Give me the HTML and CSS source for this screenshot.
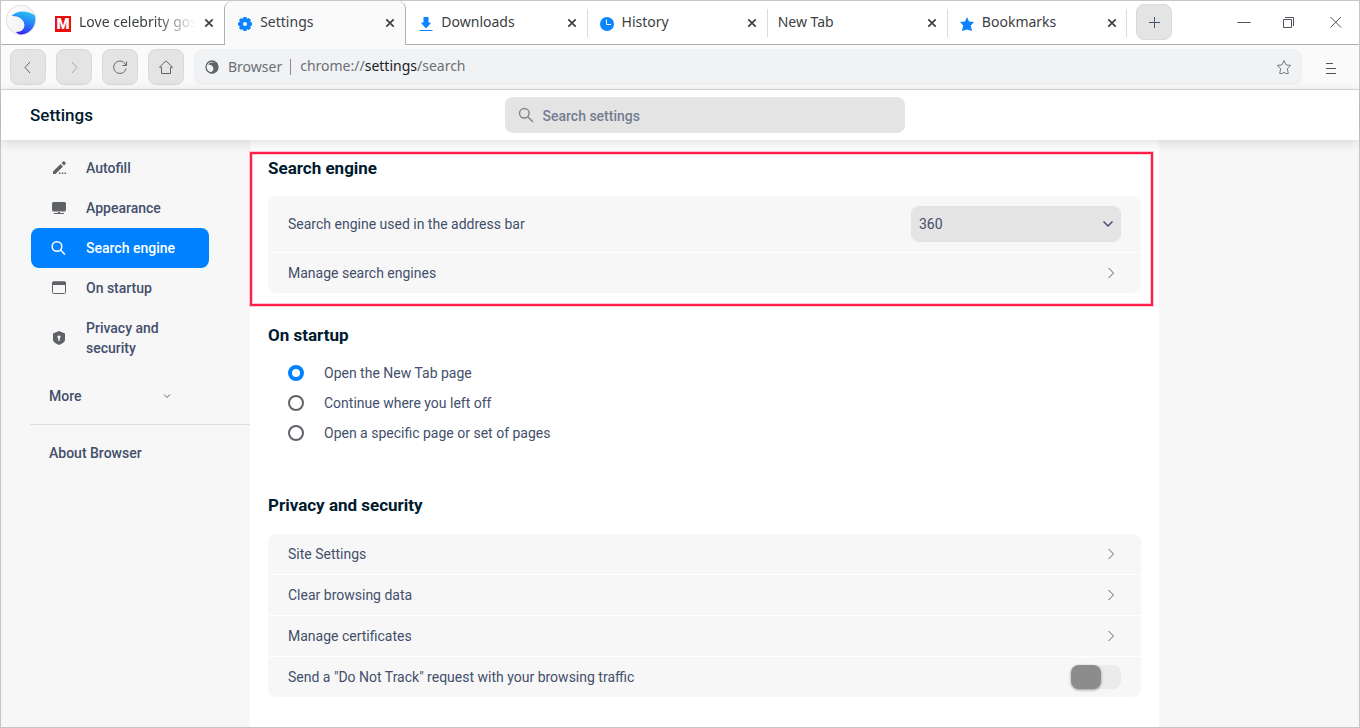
FILE: index.html
```html
<!DOCTYPE html>
<html lang="en">
<head>
<meta charset="utf-8">
<title>Settings</title>
<link rel="stylesheet" href="styles.css">
</head>
<body>
<div class="window">
  <div class="tabstrip">
    <svg class="logo" viewBox="0 0 32 32" aria-hidden="true">
      <defs>
        <linearGradient id="wave" x1="0.7" y1="0" x2="0.4" y2="1">
          <stop offset="0" stop-color="#2cc4ee"/><stop offset="0.45" stop-color="#2385fb"/><stop offset="1" stop-color="#3a22f5"/>
        </linearGradient>
        <linearGradient id="disc" x1="0" y1="0" x2="1" y2="1">
          <stop offset="0" stop-color="#ffffff"/><stop offset="1" stop-color="#ececef"/>
        </linearGradient>
      </defs>
      <circle cx="16" cy="15" r="14.800" fill="url(#disc)" stroke="#dedee2"/>
      <path d="M6.500 11C11 5.500 22 4.500 30 10.500C31.500 19 27 28.500 16.500 29.600C14 29.600 12 28.500 11 27C17 27 20 23.500 19.300 19C18.500 14 13 10.500 6.500 11Z" fill="url(#wave)"/>
    </svg>
    <div class="tabs">
      <div class="tab">
        <span class="favicon-m">M</span>
        <span class="tab-title fade">Love celebrity gos</span>
        <button class="tab-close" aria-label="Close tab"><svg viewBox="0 0 10 10"><path d="M1.300 1.300L8.700 8.700M8.700 1.300L1.300 8.700"/></svg></button>
      </div>
      <div class="tab active">
        <svg class="favicon" viewBox="0 0 14 14"><path fill-rule="evenodd" d="M5.500 0H8.500L9 1.700L10.800 .9L13 3.100L12.200 5L14 5.500V8.500L12.200 9L13 10.900L10.800 13.100L9 12.300L8.500 14H5.500L5 12.300L3.200 13.100L1 10.900L1.800 9L0 8.500V5.500L1.800 5L1 3.100L3.200 .9L5 1.700ZM7 4.900A2.100 2.100 0 1 0 7 9.100A2.100 2.100 0 1 0 7 4.900Z"/></svg>
        <span class="tab-title">Settings</span>
        <button class="tab-close" aria-label="Close tab"><svg viewBox="0 0 10 10"><path d="M1.300 1.300L8.700 8.700M8.700 1.300L1.300 8.700"/></svg></button>
      </div>
      <div class="tab">
        <svg class="favicon" viewBox="0 0 14 14"><path d="M4.500 0H9.500V5.500H11.500V6.500L7.500 11H6.500L2.500 6.500V5.500H4.500ZM.5 13H13.500V14H.5Z"/></svg>
        <span class="tab-title">Downloads</span>
        <button class="tab-close" aria-label="Close tab"><svg viewBox="0 0 10 10"><path d="M1.300 1.300L8.700 8.700M8.700 1.300L1.300 8.700"/></svg></button>
      </div>
      <div class="tab divided">
        <svg class="favicon" viewBox="0 0 14 14"><circle cx="7" cy="7" r="7"/><path d="M6.500 2.500V7.500H11" fill="none" stroke="#fff"/></svg>
        <span class="tab-title">History</span>
        <button class="tab-close" aria-label="Close tab"><svg viewBox="0 0 10 10"><path d="M1.300 1.300L8.700 8.700M8.700 1.300L1.300 8.700"/></svg></button>
      </div>
      <div class="tab divided">
        <span class="tab-title">New Tab</span>
        <button class="tab-close" aria-label="Close tab"><svg viewBox="0 0 10 10"><path d="M1.300 1.300L8.700 8.700M8.700 1.300L1.300 8.700"/></svg></button>
      </div>
      <div class="tab divided last">
        <svg class="favicon" viewBox="0 0 14 14"><path d="M7 0L9 4.600L14 5L10.800 8.600L12 14L7 12.500L2 14L3.200 8.600L0 5L5 4.600Z"/></svg>
        <span class="tab-title">Bookmarks</span>
        <button class="tab-close" aria-label="Close tab"><svg viewBox="0 0 10 10"><path d="M1.300 1.300L8.700 8.700M8.700 1.300L1.300 8.700"/></svg></button>
      </div>
    </div>
    <button class="square-button new-tab" aria-label="New tab"><svg viewBox="0 0 18 18"><path d="M4 9.500H15M9.500 4V15" stroke="#4a5570"/></svg></button>
    <div class="window-controls">
      <button aria-label="Minimize"><svg viewBox="0 0 14 14"><path d="M.5 7.500H13.500"/></svg></button>
      <button aria-label="Restore"><svg viewBox="0 0 14 14"><path d="M.5 4.500H8.500V12.500H.5ZM2 2.500H10.500V11"/></svg></button>
      <button aria-label="Close window"><svg viewBox="0 0 14 14"><path d="M1.500 2L12 12.500M12 2L1.500 12.500"/></svg></button>
    </div>
  </div>

  <div class="toolbar">
    <button class="square-button" aria-label="Back"><svg viewBox="0 0 18 18"><path d="M11 4L6 9.500L11 15"/></svg></button>
    <button class="square-button dim" aria-label="Forward"><svg viewBox="0 0 18 18"><path d="M7 4L12 9.500L7 15"/></svg></button>
    <button class="square-button" aria-label="Reload"><svg viewBox="0 0 18 18"><path d="M15 8A6.200 6.200 0 1 0 15 10.500M15.500 3.500V7.500H11.500"/></svg></button>
    <button class="square-button" aria-label="Home"><svg viewBox="0 0 18 18"><path d="M9 2.800L2.500 9.300H4.500V15.500H13.500V9.300H15.500Z"/></svg></button>
    <div class="omnibox">
      <svg class="site-icon" viewBox="0 0 14 14"><circle cx="7" cy="7" r="6" fill="none" stroke="#5f6368" stroke-width="1.300"/><path d="M3 4.500C5 2.500 8.500 1.500 11.500 3C14 6 13.500 11 8.500 13.200C6.500 13.500 5 12.500 5 12.500C8 12 8.800 9.500 8.200 7.500C7.500 5.300 5 4.300 3 4.500Z" fill="#5f6368"/></svg>
      <span class="site-name">Browser</span>
      <span class="url">chrome://<b>settings</b>/search</span>
      <button class="star" aria-label="Bookmark this page"><svg viewBox="0 0 16 16"><path d="M8 1.500L10 5.900L14.800 6.400L11.300 9.600L12.300 14.500H9.800L8 13.300L6.200 14.500H3.700L4.700 9.600L1.200 6.400L6 5.900Z"/></svg></button>
    </div>
    <button class="menu" aria-label="Menu"><svg viewBox="0 0 12 12"><path d="M1 1.500H8M1 6.500H11M1 11.500H11"/></svg></button>
  </div>

  <header class="page-header">
    <h1>Settings</h1>
    <label class="search">
      <svg viewBox="0 0 16 16"><circle cx="6.300" cy="6.300" r="4.800"/><path d="M10 10L15 15"/></svg>
      <input type="text" placeholder="Search settings" aria-label="Search settings">
    </label>
  </header>

  <div class="page">
    <nav class="sidebar">
      <a class="nav-item" href="#autofill"><svg viewBox="0 0 16 16"><path d="M2 14V11.500L9.500 4L12 6.500L4.500 14ZM10.500 3L12 1.500Q12.700 1 13.400 1.500L14.500 2.600Q15 3.300 14.500 4L13 5.500ZM8 12.500H9.500V14H8ZM10.800 12.500H12.300V14H10.800ZM13.500 12.500H15V14H13.500Z"/></svg>Autofill</a>
      <a class="nav-item" href="#appearance"><svg viewBox="0 0 16 16"><path d="M2.500 2H13.500Q15 2 15 3.500V9.500Q15 11 13.500 11H2.500Q1 11 1 9.500V3.500Q1 2 2.500 2ZM1.500 11.500H14.500V12H9V13H13V14H3V13H7V12H1.500Z"/></svg>Appearance</a>
      <a class="nav-item selected" href="#search"><svg viewBox="0 0 16 16"><g fill="none" stroke="#fff" stroke-width="1.500"><circle cx="6" cy="6.500" r="4.800"/><path d="M9.500 10L14 14.500"/></g></svg>Search engine</a>
      <a class="nav-item" href="#startup"><svg viewBox="0 0 16 16"><path d="M2 1.500H14L15 2.500V5H1V2.500Z"/><rect x="1.500" y="2" width="13" height="11.500" rx="1" fill="none" stroke="#5f6368"/></svg>On startup</a>
      <a class="nav-item tall" href="#privacy"><svg viewBox="0 0 16 16"><path fill-rule="evenodd" d="M8 1L14 3.500V10Q14 12.500 8 15Q2 12.500 2 10V3.500ZM8 5.500A1.500 1.500 0 0 0 7.200 8.300V10.800H8.800V8.300A1.500 1.500 0 0 0 8 5.500Z"/></svg>Privacy and<br>security</a>
      <button class="more">More<svg viewBox="0 0 8 8"><path d="M1 2.500L4 5.500L7 2.500"/></svg></button>
      <hr>
      <a class="about" href="#about">About Browser</a>
    </nav>

    <main>
      <section class="highlighted">
        <h2>Search engine</h2>
        <div class="card">
          <div class="row large">
            <label for="engine">Search engine used in the address bar</label>
            <span class="select-box">
              <select id="engine"><option>360</option></select>
              <svg viewBox="0 0 12 12"><path d="M1.500 3.500L6 8L10.500 3.500"/></svg>
            </span>
          </div>
          <button class="row">Manage search engines<svg class="chevron" viewBox="0 0 10 10"><path d="M2.500 0L7.500 5L2.500 10"/></svg></button>
        </div>
      </section>

      <section class="startup">
        <h2>On startup</h2>
        <div class="radios">
          <label><input type="radio" name="startup" checked>Open the New Tab page</label>
          <label><input type="radio" name="startup">Continue where you left off</label>
          <label><input type="radio" name="startup">Open a specific page or set of pages</label>
        </div>
      </section>

      <section class="privacy">
        <h2>Privacy and security</h2>
        <div class="card">
          <button class="row">Site Settings<svg class="chevron" viewBox="0 0 10 10"><path d="M2.500 0L7.500 5L2.500 10"/></svg></button>
          <button class="row">Clear browsing data<svg class="chevron" viewBox="0 0 10 10"><path d="M2.500 0L7.500 5L2.500 10"/></svg></button>
          <button class="row">Manage certificates<svg class="chevron" viewBox="0 0 10 10"><path d="M2.500 0L7.500 5L2.500 10"/></svg></button>
          <label class="row">Send a "Do Not Track" request with your browsing traffic<input class="toggle" type="checkbox"></label>
        </div>
      </section>
    </main>
  </div>
</div>
</body>
</html>
```
FILE: styles.css
```css
*, *::before { box-sizing: border-box; }

body {
  margin: 0;
  font: 14px/20px Roboto, sans-serif;
  color: #434f6b;
}

button {
  border: 0;
  padding: 0;
  background: none;
  font: inherit;
  color: inherit;
}

a { color: inherit; text-decoration: none; }

svg { flex: none; display: block; }

.window {
  display: flex;
  flex-direction: column;
  min-height: 100vh;
  border: 1px solid #c4c6ca;
  background: #f7f7f7;
}

/* Tabs */
.tabstrip {
  display: flex;
  height: 44px;
  background: #fff;
  box-shadow: inset 0 -1px #b0b0b0;
  font: 14px/20px "Noto Sans", sans-serif;
  color: #3c4043;
}

.logo {
  width: 32px;
  height: 32px;
  margin: 4px 7px 0 4px;
}

.tabs {
  display: flex;
  flex: 0 1 1083px;
  min-width: 0;
}

.tab {
  display: flex;
  align-items: center;
  flex: 1 1 0;
  min-width: 0;
  gap: 8px;
  padding: 0 10px 2px 11px;
}

.tab.active {
  border: 1px solid #b0b0b0;
  border-width: 0 1px;
  border-radius: 8px 8px 0 0;
  background: #fafafa;
}

.tab.divided {
  background: linear-gradient(#dcdcdc, #dcdcdc) no-repeat 0 8px / 1px 28px;
}

.tab.last {
  background:
    linear-gradient(#dcdcdc, #dcdcdc) no-repeat 0 8px / 1px 28px,
    linear-gradient(#dcdcdc, #dcdcdc) no-repeat 100% 8px / 1px 28px;
}

.favicon {
  width: 14px;
  height: 14px;
  margin: 4px 0 0 2px;
  fill: #0a84ff;
}

.favicon-m {
  flex: none;
  width: 16px;
  height: 16px;
  margin-top: 3px;
  border: 1px solid #e90e0e;
  background: #e90e0e;
  color: #fff;
  font: 900 15px/14px Roboto, sans-serif;
  text-align: center;
}

.tab-title {
  flex: 1;
  min-width: 0;
  white-space: nowrap;
}

.tab-title.fade {
  mask-image: linear-gradient(90deg, #000 65%, transparent);
}

.tab-close svg {
  width: 10px;
  height: 10px;
  margin-top: 2px;
  stroke: #3c4043;
  stroke-width: 1.7;
}

.square-button {
  display: grid;
  place-items: center;
  flex: none;
  width: 36px;
  height: 36px;
  border: 1px solid #dadada;
  border-radius: 8px;
  background: #e4e4e4;
}

.square-button svg {
  width: 18px;
  height: 18px;
  fill: none;
  stroke: #5f6368;
}

.square-button.dim svg { stroke: #a8a8a8; }

.new-tab { margin: 3px 0 0 9px; }

.window-controls {
  display: flex;
  align-items: center;
  gap: 32px;
  margin-left: auto;
  padding: 0 16px 2px 0;
}

.window-controls svg {
  width: 14px;
  height: 14px;
  fill: none;
  stroke: #50545c;
}

/* Toolbar */
.toolbar {
  display: flex;
  align-items: center;
  gap: 10px;
  height: 45px;
  padding: 0 22px 1px 9px;
  border-bottom: 1px solid #dadada;
  background: #fafafa;
  font: 14px/20px "Noto Sans", sans-serif;
  color: #6b6f74;
}

.omnibox {
  display: flex;
  align-items: center;
  flex: 1;
  height: 36px;
  padding: 0 10px 0 11px;
  border-radius: 8px;
  background: #f1f2f4;
}

.site-icon {
  width: 14px;
  height: 14px;
  margin-right: 9px;
}

.site-name {
  margin-right: 9px;
  padding-right: 9px;
  background: linear-gradient(#85898d, #85898d) no-repeat 100% 2px / 1px 16px;
}

.url {
  flex: 1;
  padding-bottom: 2px;
}

.url b { font-weight: 400; color: #202124; }

.star svg {
  width: 16px;
  height: 16px;
  fill: none;
  stroke: #777b80;
}

.menu { margin-left: 13px; }

.menu svg {
  width: 12px;
  height: 12px;
  margin-top: 3px;
  fill: none;
  stroke: #50545c;
}

/* Settings header */
.page-header {
  display: grid;
  grid-template-columns: 249px 1fr 200px;
  align-items: center;
  position: relative;
  height: 50px;
  background: #fff;
  box-shadow: 0 2px 12px rgba(0, 0, 0, 0.14);
}

h1 {
  margin: 0 0 0 29px;
  font-size: 17px;
  line-height: 28px;
  font-weight: 500;
  color: #001a2e;
}

.search {
  display: flex;
  align-items: center;
  justify-self: center;
  gap: 9px;
  width: 400px;
  height: 36px;
  padding: 0 13px;
  border-radius: 8px;
  background: #e4e4e4;
}

.search svg {
  width: 16px;
  height: 16px;
  fill: none;
  stroke: #858585;
  stroke-width: 1.5;
}

.search input {
  flex: 1;
  min-width: 0;
  border: 0;
  padding: 2px 0 0;
  outline: 0;
  background: none;
  font: 500 14px/20px Roboto, sans-serif;
}

.search input::placeholder { color: #747d91; opacity: 1; }

/* Page body */
.page {
  display: grid;
  grid-template-columns: 249px 1fr 200px;
  flex: 1;
}

.sidebar {
  padding: 8px 0 0 30px;
  font-weight: 500;
}

.nav-item {
  display: flex;
  align-items: center;
  gap: 19px;
  width: 178px;
  height: 40px;
  padding-left: 20px;
  border-radius: 8px;
}

.nav-item.tall { height: 60px; }

.nav-item svg {
  width: 16px;
  height: 16px;
  fill: #5f6368;
}

.nav-item.selected {
  background: #0081ff;
  color: #fff;
}

.more {
  display: flex;
  align-items: center;
  justify-content: space-between;
  width: 178px;
  height: 40px;
  margin-top: 8px;
  padding: 0 38px 0 18px;
}

.more svg {
  width: 8px;
  height: 8px;
  fill: none;
  stroke: #5f6368;
}

.sidebar hr {
  height: 1px;
  margin: 8px 0 8px -1px;
  border: 0;
  background: #dedede;
}

.about {
  display: block;
  padding: 10px 18px;
}

main {
  padding: 12px 0 30px;
  background: #fff;
}

section { padding: 0 18px; }

.highlighted {
  margin-right: 6px;
  padding: 0 10px 11px 16px;
  border: 2px solid #ff1f4b;
  box-shadow: 0 0 0 1px rgba(255, 31, 75, 0.25), inset 0 0 0 1px rgba(255, 31, 75, 0.25);
}

h2 {
  margin: 0;
  font-size: 17px;
  line-height: 28px;
  font-weight: 700;
  color: #001a2e;
}

.startup { margin-top: 15px; }

.privacy { margin-top: 43px; }

.card {
  display: grid;
  gap: 1px;
  margin-top: 15px;
  border-radius: 8px;
  overflow: hidden;
}

.highlighted .card { margin-top: 14px; }

.row {
  display: flex;
  align-items: center;
  justify-content: space-between;
  height: 40px;
  padding: 0 20px;
  background: #f7f7f7;
}

.row.large { height: 56px; }

.chevron {
  width: 10px;
  height: 10px;
  margin-right: 5px;
  fill: none;
  stroke: #5f6368;
}

.select-box {
  position: relative;
  width: 210px;
}

.select-box select {
  width: 100%;
  height: 36px;
  padding: 0 8px;
  appearance: none;
  border: 0;
  border-radius: 8px;
  background: #e4e4e4;
  font: inherit;
  color: inherit;
}

.select-box svg {
  position: absolute;
  top: 12px;
  right: 7px;
  width: 12px;
  height: 12px;
  fill: none;
  stroke: #434f6b;
  stroke-width: 1.5;
  pointer-events: none;
}

.radios {
  margin-top: 9px;
  padding-left: 20px;
}

.radios label {
  display: flex;
  align-items: center;
  gap: 20px;
  height: 30px;
}

.radios input {
  width: 16px;
  height: 16px;
  margin: 0;
  appearance: none;
  border: 2px solid #5f6368;
  border-radius: 50%;
}

.radios input:checked { border: 4px solid #0081ff; }

.toggle {
  width: 50px;
  height: 24px;
  margin: 0;
  appearance: none;
  border-radius: 8px;
  background: #ebebeb;
}

.toggle::before {
  content: "";
  display: block;
  width: 30px;
  height: 24px;
  border-radius: 8px;
  background: #8c8c8c;
  box-shadow: 0 1px 3px rgba(0, 0, 0, 0.4);
}
```
